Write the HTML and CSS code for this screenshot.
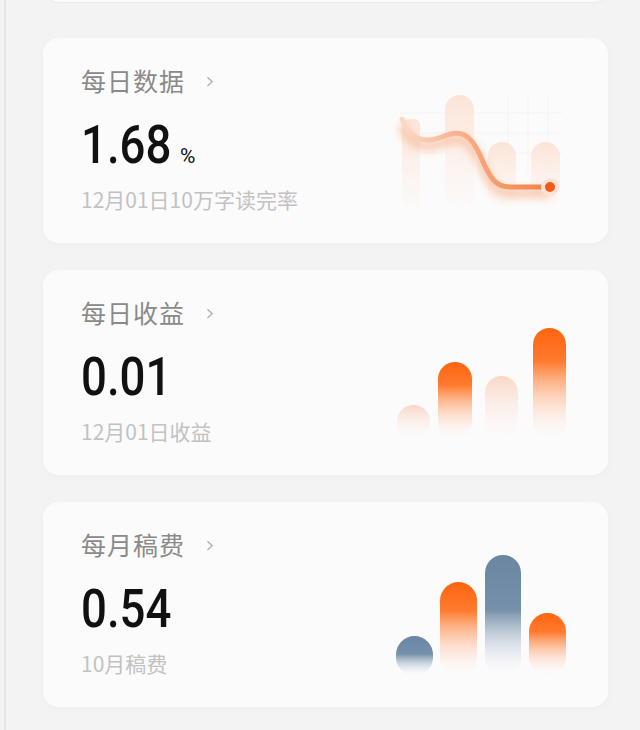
FILE: index.html
```html
<!DOCTYPE html>
<html lang="zh-CN">
<head>
    <meta charset="UTF-8">
    <meta name="viewport" content="width=device-width, initial-scale=1.0">
    <title>数据中心</title>
    <link rel="stylesheet" href="styles.css">
</head>
<body>
    <div class="screen">
        <div class="card-stub"></div>

        <div class="card-list">
            <!-- 每日数据 -->
            <div class="card">
                <div class="card-info">
                    <p class="card-title">每日数据 <span class="chevron">&#8250;</span></p>
                    <p class="card-value"><span class="num">1.68</span><span class="unit">%</span></p>
                    <p class="card-sub">12月01日10万字读完率</p>
                </div>
                <svg class="card-chart" width="180" height="130" viewBox="0 0 180 130">
                    <defs>
                        <linearGradient id="peach" x1="0" y1="0" x2="0" y2="1">
                            <stop offset="0" stop-color="#fce3d6"/>
                            <stop offset="1" stop-color="#fdf6f2" stop-opacity="0.4"/>
                        </linearGradient>
                        <linearGradient id="line" x1="0" y1="0" x2="1" y2="0">
                            <stop offset="0" stop-color="#fbd9c6"/>
                            <stop offset="0.4" stop-color="#f6b08a"/>
                            <stop offset="1" stop-color="#f2803f"/>
                        </linearGradient>
                        <filter id="blur" x="-20%" y="-20%" width="140%" height="160%">
                            <feGaussianBlur stdDeviation="4"/>
                        </filter>
                    </defs>
                    <g stroke="#f6f3f1" stroke-width="1">
                        <line x1="10" y1="30" x2="172" y2="30"/>
                        <line x1="10" y1="50" x2="172" y2="50"/>
                        <line x1="10" y1="70" x2="172" y2="70"/>
                        <line x1="118" y1="14" x2="118" y2="90"/>
                        <line x1="138" y1="14" x2="138" y2="90"/>
                        <line x1="158" y1="14" x2="158" y2="90"/>
                    </g>
                    <rect x="12" y="36" width="18" height="88" rx="6" fill="url(#peach)"/>
                    <rect x="55" y="12" width="29" height="112" rx="14.5" fill="url(#peach)"/>
                    <rect x="98" y="59" width="28" height="65" rx="14" fill="url(#peach)"/>
                    <rect x="141" y="59" width="29" height="65" rx="14.5" fill="url(#peach)"/>
                    <path d="M12 36 C20 58, 36 60, 52 54 C70 46, 80 50, 90 72 C100 96, 106 104, 120 104 L160 104" fill="none" stroke="#f8c3a6" stroke-width="8" filter="url(#blur)" transform="translate(0 6)"/>
                    <path d="M12 36 C20 58, 36 60, 52 54 C70 46, 80 50, 90 72 C100 96, 106 104, 120 104 L160 104" fill="none" stroke="url(#line)" stroke-width="5" stroke-linecap="round"/>
                    <circle cx="160" cy="104" r="9" fill="#fde3d4"/>
                    <circle cx="160" cy="104" r="5" fill="#f25a1a"/>
                </svg>
            </div>

            <!-- 每日收益 -->
            <div class="card">
                <div class="card-info">
                    <p class="card-title">每日收益 <span class="chevron">&#8250;</span></p>
                    <p class="card-value"><span class="num">0.01</span></p>
                    <p class="card-sub">12月01日收益</p>
                </div>
                <svg class="card-chart" width="180" height="130" viewBox="0 0 180 130">
                    <defs>
                        <linearGradient id="orange" x1="0" y1="0" x2="0" y2="1">
                            <stop offset="0" stop-color="#ff6510"/>
                            <stop offset="0.3" stop-color="#ff7a2e"/>
                            <stop offset="1" stop-color="#fff3ec" stop-opacity="0"/>
                        </linearGradient>
                        <linearGradient id="soft" x1="0" y1="0" x2="0" y2="1">
                            <stop offset="0" stop-color="#f9d6c6"/>
                            <stop offset="1" stop-color="#fdf4ef" stop-opacity="0"/>
                        </linearGradient>
                    </defs>
                    <rect x="7" y="90" width="33" height="34" rx="16.5" fill="url(#soft)"/>
                    <rect x="48" y="47" width="34" height="77" rx="17" fill="url(#orange)"/>
                    <rect x="95" y="61" width="33" height="63" rx="16.5" fill="url(#soft)"/>
                    <rect x="143" y="13" width="33" height="111" rx="16.5" fill="url(#orange)"/>
                </svg>
            </div>

            <!-- 每月稿费 -->
            <div class="card">
                <div class="card-info">
                    <p class="card-title">每月稿费 <span class="chevron">&#8250;</span></p>
                    <p class="card-value"><span class="num">0.54</span></p>
                    <p class="card-sub">10月稿费</p>
                </div>
                <svg class="card-chart" width="180" height="130" viewBox="0 0 180 130">
                    <defs>
                        <linearGradient id="orange2" x1="0" y1="0" x2="0" y2="1">
                            <stop offset="0" stop-color="#ff6510"/>
                            <stop offset="0.3" stop-color="#ff7a2e"/>
                            <stop offset="1" stop-color="#fff3ec" stop-opacity="0"/>
                        </linearGradient>
                        <linearGradient id="slate" x1="0" y1="0" x2="0" y2="1">
                            <stop offset="0" stop-color="#6a86a2"/>
                            <stop offset="0.45" stop-color="#7590aa"/>
                            <stop offset="1" stop-color="#eef2f6" stop-opacity="0"/>
                        </linearGradient>
                    </defs>
                    <rect x="6" y="89" width="37" height="40" rx="18.5" fill="url(#slate)"/>
                    <rect x="50" y="35" width="37" height="94" rx="18.5" fill="url(#orange2)"/>
                    <rect x="95" y="8" width="36" height="121" rx="18" fill="url(#slate)"/>
                    <rect x="139" y="66" width="37" height="63" rx="18.5" fill="url(#orange2)"/>
                </svg>
            </div>
        </div>
    </div>
</body>
</html>
```

FILE: styles.css
```css
body {
    font-family: "Noto Sans CJK SC", "Noto Sans", sans-serif;
    margin: 0;
    padding: 0;
    background-color: #f3f3f3;
    overflow: hidden;
}

.screen {
    display: flow-root;
    margin-left: 4px;
    border-left: 2px solid #e6e6e6;
    min-height: 730px;
    padding-left: 37px;
}

.card-stub {
    width: 567px;
    height: 20px;
    margin-top: -18px;
    background-color: #fafafa;
    border-radius: 0 0 16px 16px;
    box-shadow: 0 1px 2px rgba(0, 0, 0, 0.04);
}

.card-list {
    display: flex;
    flex-direction: column;
    gap: 27px;
    margin-top: 36px;
}

.card {
    width: 565px;
    height: 205px;
    box-sizing: border-box;
    padding: 27px 0 0 38px;
    display: flex;
    justify-content: space-between;
    background-color: #fbfbfb;
    border-radius: 16px;
    box-shadow: 0 2px 10px rgba(0, 0, 0, 0.025);
}

.card-info p {
    margin: 0;
}

.card-title {
    font-size: 25px;
    line-height: 30px;
    color: #8a8a8a;
    letter-spacing: 1px;
}

.chevron {
    display: inline-block;
    margin-left: 14px;
    font-size: 24px;
    color: #a9a9a9;
    font-family: "DejaVu Sans", sans-serif;
    font-weight: 300;
    vertical-align: 2px;
}

.card-value {
    margin-top: 20px !important;
    font-family: Roboto, "Liberation Sans", sans-serif;
    font-size: 53px;
    line-height: 58px;
    font-weight: 500;
    color: #111;
}

.num {
    display: inline-block;
    transform: scaleX(0.86);
    transform-origin: left center;
    margin-right: -15px;
}

.unit {
    font-size: 21px;
    line-height: 1;
    margin-left: 9px;
    font-weight: 400;
}

.card-sub {
    margin-top: 12px !important;
    font-size: 21px;
    line-height: 26px;
    color: #c2c2c2;
}

.card-chart {
    margin: 18px 38px 0 0;
}
```
